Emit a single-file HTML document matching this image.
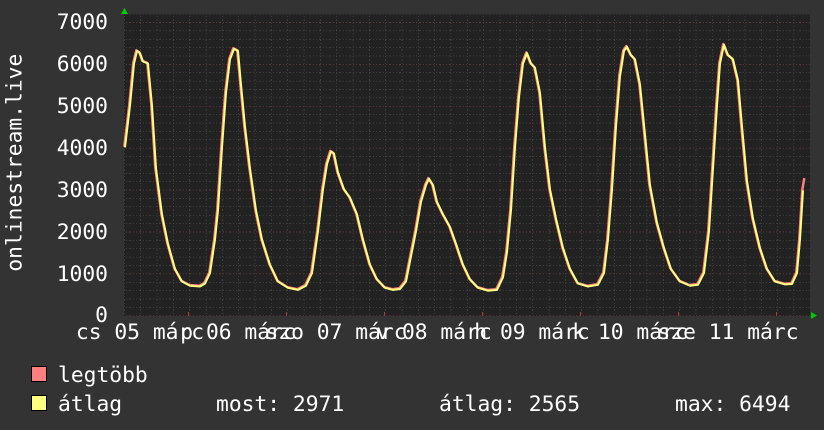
<!DOCTYPE html>
<html><head><meta charset="utf-8"><style>
body{margin:0;width:824px;height:430px;background:#333333;overflow:hidden;position:relative;font-family:"DejaVu Sans Mono","Liberation Mono",monospace;color:#fff;font-size:21.3px}
.t{position:absolute;white-space:pre;line-height:1}
.yl{position:absolute;right:716px;white-space:pre;line-height:1}
.xl{position:absolute;white-space:pre;line-height:1;transform:translateX(-50%)}
</style></head><body>
<svg width="824" height="430" style="position:absolute;left:0;top:0">
<defs>
<pattern id="ph" patternUnits="userSpaceOnUse" x="0" y="315.5" width="10" height="8.38"><line x1="0" x2="10" y1="0" y2="0" stroke="#555" stroke-dasharray="1,2"/></pattern>
<pattern id="pH" patternUnits="userSpaceOnUse" x="0" y="315.5" width="10" height="41.9"><line x1="0" x2="10" y1="0" y2="0" stroke="#7a3a3a" stroke-dasharray="1,2"/></pattern>
<pattern id="pv" patternUnits="userSpaceOnUse" x="140.5" y="0" width="16.33" height="10"><line x1="0" x2="0" y1="0" y2="10" stroke="#555" stroke-dasharray="1,2"/></pattern>
</defs>
<rect x="124" y="14" width="686" height="302" fill="#222"/>
<rect x="124" y="14" width="686" height="302" fill="url(#pv)"/>
<rect x="124" y="14" width="686" height="302" fill="url(#ph)"/>
<rect x="124" y="14" width="686" height="302" fill="url(#pH)"/>
<g stroke="#a04040" stroke-width="1"><line x1="188.5" x2="188.5" y1="312" y2="316"/><line x1="286.5" x2="286.5" y1="312" y2="316"/><line x1="384.5" x2="384.5" y1="312" y2="316"/><line x1="482.5" x2="482.5" y1="312" y2="316"/><line x1="580.5" x2="580.5" y1="312" y2="316"/><line x1="678.5" x2="678.5" y1="312" y2="316"/><line x1="776.5" x2="776.5" y1="312" y2="316"/></g>
<polygon points="121,14 128,14 124.5,8" fill="#0c0"/>
<polygon points="811,312 811,319 817,315.5" fill="#0c0"/>
<g fill="none" stroke-linejoin="round">
<polyline transform="translate(-0.7,-0.7)" stroke="#ff7f7f" stroke-width="2.5" points="125,147.4 130,105.5 134,63.6 137,51 140,53.1 143,61.5 148,63.6 152,105.5 156,168.4 162,214.4 168,243.8 175,268.9 182,281.5 190,285.7 200,286.5 205,283.6 210,273.1 215,239.6 218,210.3 222,147.4 226,92.9 230,59.4 234,48.9 238,51 241,84.6 245,126.5 250,168.4 256,210.3 262,239.6 270,264.7 278,281.5 288,287.8 298,289.9 306,285.7 312,273.1 318,231.2 323,189.3 327,164.2 331,151.6 334,153.7 338,172.5 344,189.3 350,197.7 357,214.4 363,239.6 370,264.7 377,279.4 385,287.8 393,289.9 400,289 406,281.5 411,256.3 416,231.2 421,201.9 426,185.1 429,178.8 433,185.1 437,201.9 443,214.4 450,227 456,243.8 463,264.7 470,279.4 478,287.8 488,290.7 497,289.9 503,277.3 507,252.2 511,210.3 515,147.4 519,97.1 523,63.6 527,53.1 531,63.6 535,67.8 540,92.9 545,147.4 550,189.3 556,218.6 563,248 570,268.9 578,283.6 588,286.5 598,284.8 604,273.1 608,239.6 612,189.3 616,126.5 620,76.2 624,51 627,46.8 631,55.2 635,59.4 640,84.6 645,134.8 650,185.1 657,222.8 664,248 671,268.9 680,281.5 690,285.7 698,284.8 704,273.1 709,231.2 713,168.4 717,105.5 720,63.6 724,44.7 728,55.2 733,59.4 738,80.4 742,126.5 747,180.9 753,218.6 760,248 767,268.9 775,281.5 785,284.4 792,284 797,273.1 800,239.6 803,190.5 805,178.8"/>
<polyline stroke="#ffff80" stroke-width="2" points="125,147.4 130,105.5 134,63.6 137,51 140,53.1 143,61.5 148,63.6 152,105.5 156,168.4 162,214.4 168,243.8 175,268.9 182,281.5 190,285.7 200,286.5 205,283.6 210,273.1 215,239.6 218,210.3 222,147.4 226,92.9 230,59.4 234,48.9 238,51 241,84.6 245,126.5 250,168.4 256,210.3 262,239.6 270,264.7 278,281.5 288,287.8 298,289.9 306,285.7 312,273.1 318,231.2 323,189.3 327,164.2 331,151.6 334,153.7 338,172.5 344,189.3 350,197.7 357,214.4 363,239.6 370,264.7 377,279.4 385,287.8 393,289.9 400,289 406,281.5 411,256.3 416,231.2 421,201.9 426,185.1 429,178.8 433,185.1 437,201.9 443,214.4 450,227 456,243.8 463,264.7 470,279.4 478,287.8 488,290.7 497,289.9 503,277.3 507,252.2 511,210.3 515,147.4 519,97.1 523,63.6 527,53.1 531,63.6 535,67.8 540,92.9 545,147.4 550,189.3 556,218.6 563,248 570,268.9 578,283.6 588,286.5 598,284.8 604,273.1 608,239.6 612,189.3 616,126.5 620,76.2 624,51 627,46.8 631,55.2 635,59.4 640,84.6 645,134.8 650,185.1 657,222.8 664,248 671,268.9 680,281.5 690,285.7 698,284.8 704,273.1 709,231.2 713,168.4 717,105.5 720,63.6 724,44.7 728,55.2 733,59.4 738,80.4 742,126.5 747,180.9 753,218.6 760,248 767,268.9 775,281.5 785,284.4 792,284 797,273.1 800,239.6 803,190.5"/>
</g>
<rect x="31.5" y="366.5" width="15" height="15" fill="#ff7f7f" stroke="#000"/>
<rect x="31.5" y="395.5" width="15" height="15" fill="#ffff80" stroke="#000"/>
</svg>
<div class="yl" style="top:12px">7000</div>
<div class="yl" style="top:54px">6000</div>
<div class="yl" style="top:96px">5000</div>
<div class="yl" style="top:138px">4000</div>
<div class="yl" style="top:180px">3000</div>
<div class="yl" style="top:222px">2000</div>
<div class="yl" style="top:264px">1000</div>
<div class="yl" style="top:305px">0</div>
<div class="t" style="left:-70px;top:176px;width:170px;text-align:center;transform:rotate(-90deg)">onlinestream.live</div>
<div class="xl" style="left:140px;top:322px">cs 05 márc</div>
<div class="xl" style="left:238px;top:322px">p 06 márc</div>
<div class="xl" style="left:336px;top:322px">szo 07 márc</div>
<div class="xl" style="left:434px;top:322px">v 08 márc</div>
<div class="xl" style="left:532px;top:322px">h 09 márc</div>
<div class="xl" style="left:630px;top:322px">k 10 márc</div>
<div class="xl" style="left:728px;top:322px">sze 11 márc</div>
<div class="t" style="left:58px;top:365px">legtöbb</div>
<div class="t" style="left:58px;top:394px">átlag</div>
<div class="t" style="left:216px;top:394px">most: 2971</div>
<div class="t" style="left:439px;top:394px">átlag: 2565</div>
<div class="t" style="left:675px;top:394px">max: 6494</div>
</body></html>
